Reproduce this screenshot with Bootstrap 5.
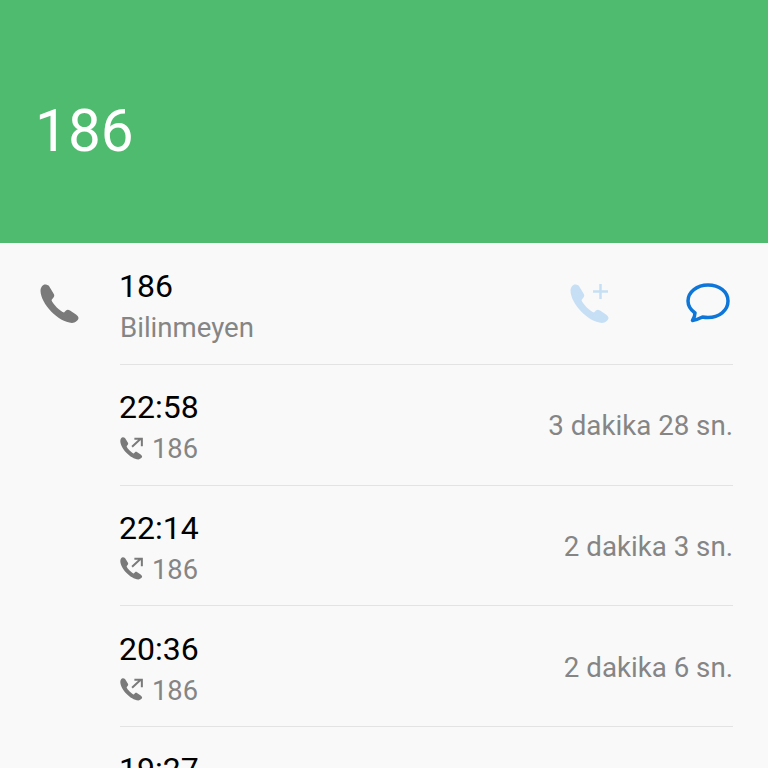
<!DOCTYPE html>
<html lang="tr">
<head>
    <meta charset="UTF-8">
    <meta name="viewport" content="width=device-width, initial-scale=1.0">
    <title>186</title>
    <link href="https://cdn.jsdelivr.net/npm/bootstrap@5.3.0/dist/css/bootstrap.min.css" rel="stylesheet">
    <style>
        html, body {
            height: 768px;
            overflow: hidden;
        }

        body {
            background-color: #f9f9f9;
            font-family: Roboto, sans-serif;
        }

        .call-header {
            height: 243px;
            padding-left: 35px;
            padding-top: 102px;
            background-color: #4fbb6f;
            color: #fff;
            font-size: 58.500px;
            line-height: 1;
        }

        .call-row {
            height: 120.67px;
            margin-left: 120px;
            margin-right: 35px;
            padding-top: 22.300px;
            border-bottom: 1px solid #e3e3e3;
        }

        .call-row.first-row {
            height: 122px;
            padding-top: 23px;
        }

        .call-title {
            margin-left: -1px;
            color: #000;
            font-size: 32px;
            line-height: 41px;
        }

        .call-sub {
            color: #858585;
            font-size: 27.600px;
            line-height: 41px;
        }

        .call-detail {
            margin-top: 1px;
            font-size: 27.300px;
        }

        .call-length {
            margin-top: 25px;
            color: #858585;
            font-size: 27.700px;
            line-height: 1;
        }

        .main-icon {
            position: absolute;
            left: 40px;
            top: 284px;
        }

        .out-icon {
            margin-right: 9px;
            margin-top: -3px;
        }

        .add-icon {
            margin-right: 76px;
            margin-top: 18px;
        }

        .msg-icon {
            margin-top: 17px;
            margin-right: 3px;
        }
    </style>
</head>
<body>
    <svg width="0" height="0" class="d-block">
        <defs>
            <path id="handset" d="M5 .5C3 .5.5 3 .5 7 1 20 18 38 32 39c3 0 6.500-3 6.500-5 0-1.500-1.500-2.500-2.500-3.500l-6-4c-1.500-1-3-1-4 0l-2 2c-3-.5-12-9-12.500-12.500l2-2.500c1-1.500 1-2.500 0-4L9 2C8 1 6.500.5 5 .5z"/>
        </defs>
    </svg>

    <div class="call-header">186</div>

    <svg class="main-icon" width="40" height="40" viewBox="0 0 40 40" fill="#7a7a7a"><use href="#handset"/></svg>

    <div class="call-list">
        <div class="call-row first-row d-flex">
            <div class="flex-grow-1">
                <div class="call-title">186</div>
                <div class="call-sub">Bilinmeyen</div>
            </div>
            <svg class="add-icon" width="40" height="40" viewBox="0 0 40 40" fill="#c6dff5">
                <use href="#handset"/>
                <path d="M23 7.500h15M30.500 0v15" stroke="#c6dff5" stroke-width="2.500" fill="none"/>
            </svg>
            <svg class="msg-icon" width="44" height="40" viewBox="0 0 44 40" fill="none" stroke="#0f76d9" stroke-width="3.500" stroke-linejoin="round">
                <path d="M22 2C11 2 2 9 2 18c0 5 3 9 7 12 0 3-1 5-2.500 7.500 4-.5 7-2 10-3.500 1.500.300 3.500.5 5.500.5 11 0 20-7 20-16.500S33 2 22 2z"/>
            </svg>
        </div>

        <div class="call-row d-flex justify-content-between align-items-start">
            <div>
                <div class="call-title">22:58</div>
                <div class="call-sub call-detail d-flex align-items-center">
                    <svg class="out-icon" width="23" height="23" viewBox="0 0 40 40" fill="#7a7a7a">
                        <use href="#handset"/>
                        <path d="M21 17 36 3M25 3h13v13" stroke="#7a7a7a" stroke-width="3.500" fill="none"/>
                    </svg>186
                </div>
            </div>
            <div class="call-length">3 dakika 28 sn.</div>
        </div>

        <div class="call-row d-flex justify-content-between align-items-start">
            <div>
                <div class="call-title">22:14</div>
                <div class="call-sub call-detail d-flex align-items-center">
                    <svg class="out-icon" width="23" height="23" viewBox="0 0 40 40" fill="#7a7a7a">
                        <use href="#handset"/>
                        <path d="M21 17 36 3M25 3h13v13" stroke="#7a7a7a" stroke-width="3.500" fill="none"/>
                    </svg>186
                </div>
            </div>
            <div class="call-length">2 dakika 3 sn.</div>
        </div>

        <div class="call-row d-flex justify-content-between align-items-start">
            <div>
                <div class="call-title">20:36</div>
                <div class="call-sub call-detail d-flex align-items-center">
                    <svg class="out-icon" width="23" height="23" viewBox="0 0 40 40" fill="#7a7a7a">
                        <use href="#handset"/>
                        <path d="M21 17 36 3M25 3h13v13" stroke="#7a7a7a" stroke-width="3.500" fill="none"/>
                    </svg>186
                </div>
            </div>
            <div class="call-length">2 dakika 6 sn.</div>
        </div>

        <div class="call-row d-flex justify-content-between align-items-start">
            <div>
                <div class="call-title">19:27</div>
            </div>
        </div>
    </div>

    <script src="https://cdn.jsdelivr.net/npm/bootstrap@5.3.0/dist/js/bootstrap.bundle.min.js"></script>
</body>
</html>
